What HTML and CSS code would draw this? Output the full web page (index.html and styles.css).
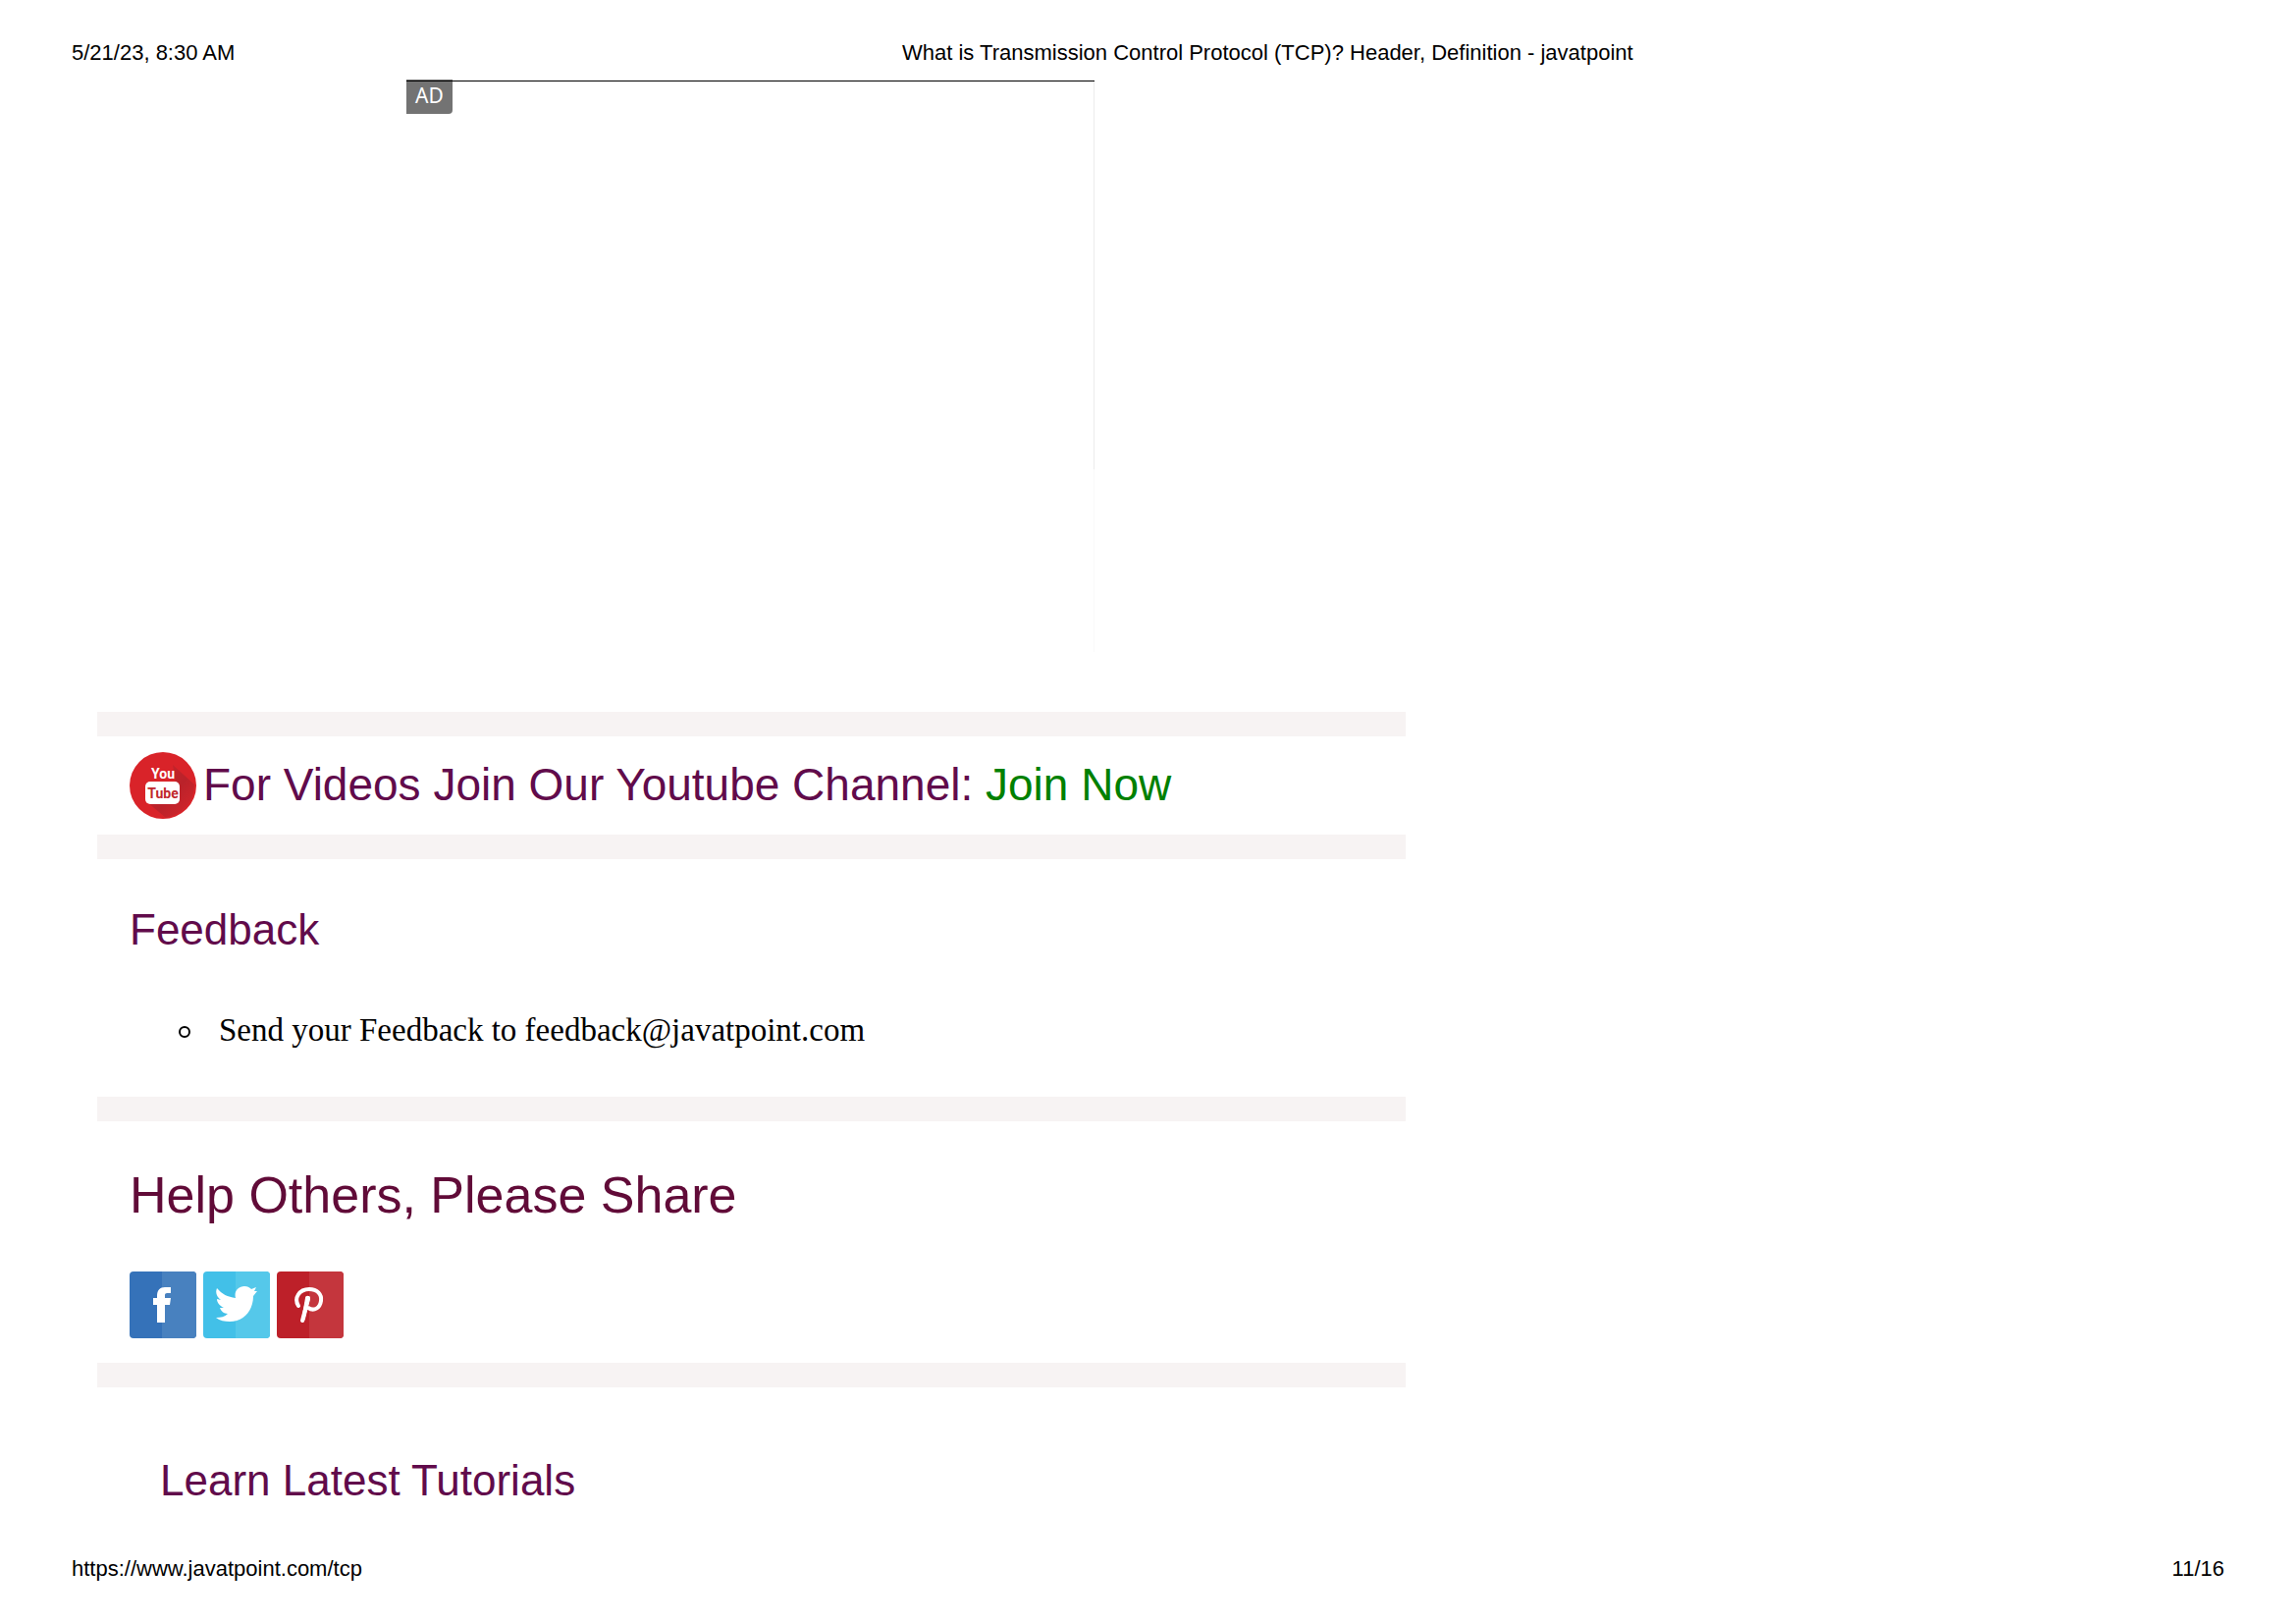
FILE: index.html
```
<!DOCTYPE html>
<html lang="en">
<head>
<meta charset="utf-8">
<meta name="viewport" content="width=device-width, initial-scale=1">
<title>What is Transmission Control Protocol (TCP)? Header, Definition - javatpoint</title>
<link rel="stylesheet" href="styles.css">
</head>
<body>
<header class="page-header">
  <span>5/21/23, 8:30 AM</span>
  <span>What is Transmission Control Protocol (TCP)? Header, Definition - javatpoint</span>
</header>
<main class="content">
  <aside class="ad"><span class="ad-badge">AD</span></aside>

  <section class="section video">
    <a class="icon-link" href="#youtube" aria-label="YouTube">
      <svg class="icon" viewBox="0 0 68 68">
        <defs>
          <linearGradient id="shade" x1="0.3" y1="0.3" x2="0.9" y2="0.9">
            <stop offset="0" stop-color="#c2232a"/>
            <stop offset="0.4" stop-color="#ba222a"/>
            <stop offset="1" stop-color="#d2252b"/>
          </linearGradient>
        </defs>
        <circle cx="34" cy="34" r="34" fill="#d92329"/>
        <path d="M44 13 66 33A34 34 0 0 1 37 67L18 51 50 50Z" fill="url(#shade)"/>
        <text class="yt-text" x="34" y="27" fill="#fff">You</text>
        <rect x="16" y="30" width="35" height="23" rx="5" fill="#fff"/>
        <text class="yt-text" x="34" y="47" fill="#c0272d">Tube</text>
      </svg>
    </a>
    <p class="video-text">For Videos Join Our Youtube Channel: <a class="join" href="#join">Join Now</a></p>
  </section>

  <section class="section feedback">
    <h2 class="heading">Feedback</h2>
    <ul class="points">
      <li class="point">Send your Feedback to feedback@javatpoint.com</li>
    </ul>
  </section>

  <section class="section share">
    <h2 class="heading heading-large">Help Others, Please Share</h2>
    <div class="share-links">
      <a class="icon-link" href="#facebook" aria-label="Facebook">
        <svg class="icon" viewBox="0 0 68 68">
          <rect width="68" height="68" rx="4" fill="#3572b9"/>
          <path d="M33 0H64A4 4 0 0 1 68 4V64A4 4 0 0 1 64 68H33Z" fill="#4881bf"/>
          <path d="M28 52V34H24V27H28V25C28 19 31 16 36 16H42V22H39C36 22 36 23 36 25V27H42L41 34H36V52Z" fill="#fff"/>
        </svg>
      </a>
      <a class="icon-link" href="#twitter" aria-label="Twitter">
        <svg class="icon" viewBox="0 0 68 68">
          <rect width="68" height="68" rx="4" fill="#42c0e8"/>
          <path d="M33 0H64A4 4 0 0 1 68 4V64A4 4 0 0 1 64 68H33Z" fill="#55c8ea"/>
          <path d="M14 17C19 23 25 26 33 27C31 20 36 15 42 15C45 15 47 16 49 18L54 16L52 20L55 20L51 25C51 40 41 51 27 51C22 51 17 50 13 47C18 47 22 46 25 43C21 43 18 40 17 37H21C17 35 14 32 14 28L18 29C14 26 12 22 14 17Z" fill="#fff"/>
        </svg>
      </a>
      <a class="icon-link" href="#pinterest" aria-label="Pinterest">
        <svg class="icon" viewBox="0 0 68 68">
          <rect width="68" height="68" rx="4" fill="#bd2029"/>
          <path d="M33 0H64A4 4 0 0 1 68 4V64A4 4 0 0 1 64 68H33Z" fill="#c4363d"/>
          <path d="M22 35C17 27 23 18 33 18C41 18 46 23 45 30C44 37 38 41 32 37M32 27L26 50" fill="none" stroke="#fff" stroke-width="4" stroke-linecap="round" stroke-linejoin="round"/>
          <path d="M29 27C29 24 34 24 34 28L29 48C28 52 26 53 25 50Z" fill="#fff"/>
        </svg>
      </a>
    </div>
  </section>

  <section class="section tutorials">
    <h2 class="heading">Learn Latest Tutorials</h2>
  </section>
</main>
<footer class="page-footer">
  <a class="source" href="https://www.javatpoint.com/tcp">https://www.javatpoint.com/tcp</a>
  <span>11/16</span>
</footer>
</body>
</html>
```
FILE: styles.css
```
*,
*::before {
  box-sizing: border-box;
}

body {
  display: flex;
  flex-direction: column;
  min-height: 100vh;
  margin: 0;
  background: #fff;
  color: #000;
  font-family: "Liberation Sans", Arial, sans-serif;
}

a {
  color: inherit;
  text-decoration: none;
}

.page-header,
.page-footer {
  padding: 0 73px;
  font-size: 22px;
  line-height: 26px;
}

.page-header {
  display: grid;
  grid-template-columns: 846fr 1347fr;
  padding-top: 41px;
}

.page-footer {
  display: flex;
  justify-content: space-between;
  margin-top: auto;
  padding-bottom: 42px;
}

.content {
  width: 57%;
  margin-left: 99px;
  padding-top: 15px;
}

/* Empty advert slot, open on its left and bottom sides */
.ad {
  position: relative;
  width: 701px;
  height: 582px;
  margin: 0 0 61px 315px;
  border-top: 1px solid #000;
  background: linear-gradient(#ececec 68%, #f9f9f9 68%) right / 1px 100% no-repeat;
}

.ad-badge {
  position: absolute;
  top: -2px;
  left: 0;
  padding: 0 9px 2px;
  border-radius: 0 0 4px 0;
  background: rgba(0, 0, 0, 0.55);
  color: #fff;
  font-family: "Noto Sans", sans-serif;
  font-size: 21px;
  line-height: 33px;
}

.section {
  padding: 0 33px;
  border-top: 25px solid #f7f3f3;
}

.video {
  display: flex;
  align-items: center;
  gap: 7px;
  padding-top: 16px;
  padding-bottom: 16px;
}

.icon-link,
.icon {
  display: block;
  width: 68px;
  height: 68px;
}

.yt-text {
  font-family: Roboto, sans-serif;
  font-size: 14px;
  font-weight: bold;
  text-anchor: middle;
}

.video-text {
  margin: 0;
  padding-bottom: 3px;
  color: #610b4b;
  font-size: 46px;
  line-height: 52px;
}

.join {
  color: #008000;
}

.heading {
  margin: 0;
  color: #610b4b;
  font-size: 44px;
  font-weight: normal;
  line-height: 52px;
}

.heading-large {
  color: #610b38;
  font-size: 52px;
  line-height: 60px;
}

.feedback {
  padding-top: 46px;
  padding-bottom: 48px;
}

.points {
  margin: 56px 0 0;
  padding-left: 50px;
  font-family: "Liberation Serif", "Times New Roman", serif;
  font-size: 33px;
  line-height: 40px;
  list-style: none;
}

.point {
  display: flex;
  align-items: center;
  gap: 29px;
}

.point::before {
  content: "";
  width: 12px;
  height: 12px;
  margin-top: 3px;
  border: 2px solid #000;
  border-radius: 50%;
}

.share {
  padding-top: 45px;
  padding-bottom: 25px;
}

.share-links {
  display: flex;
  gap: 7px;
  margin-top: 48px;
}

.tutorials {
  padding-top: 69px;
  padding-left: 64px;
}
```
